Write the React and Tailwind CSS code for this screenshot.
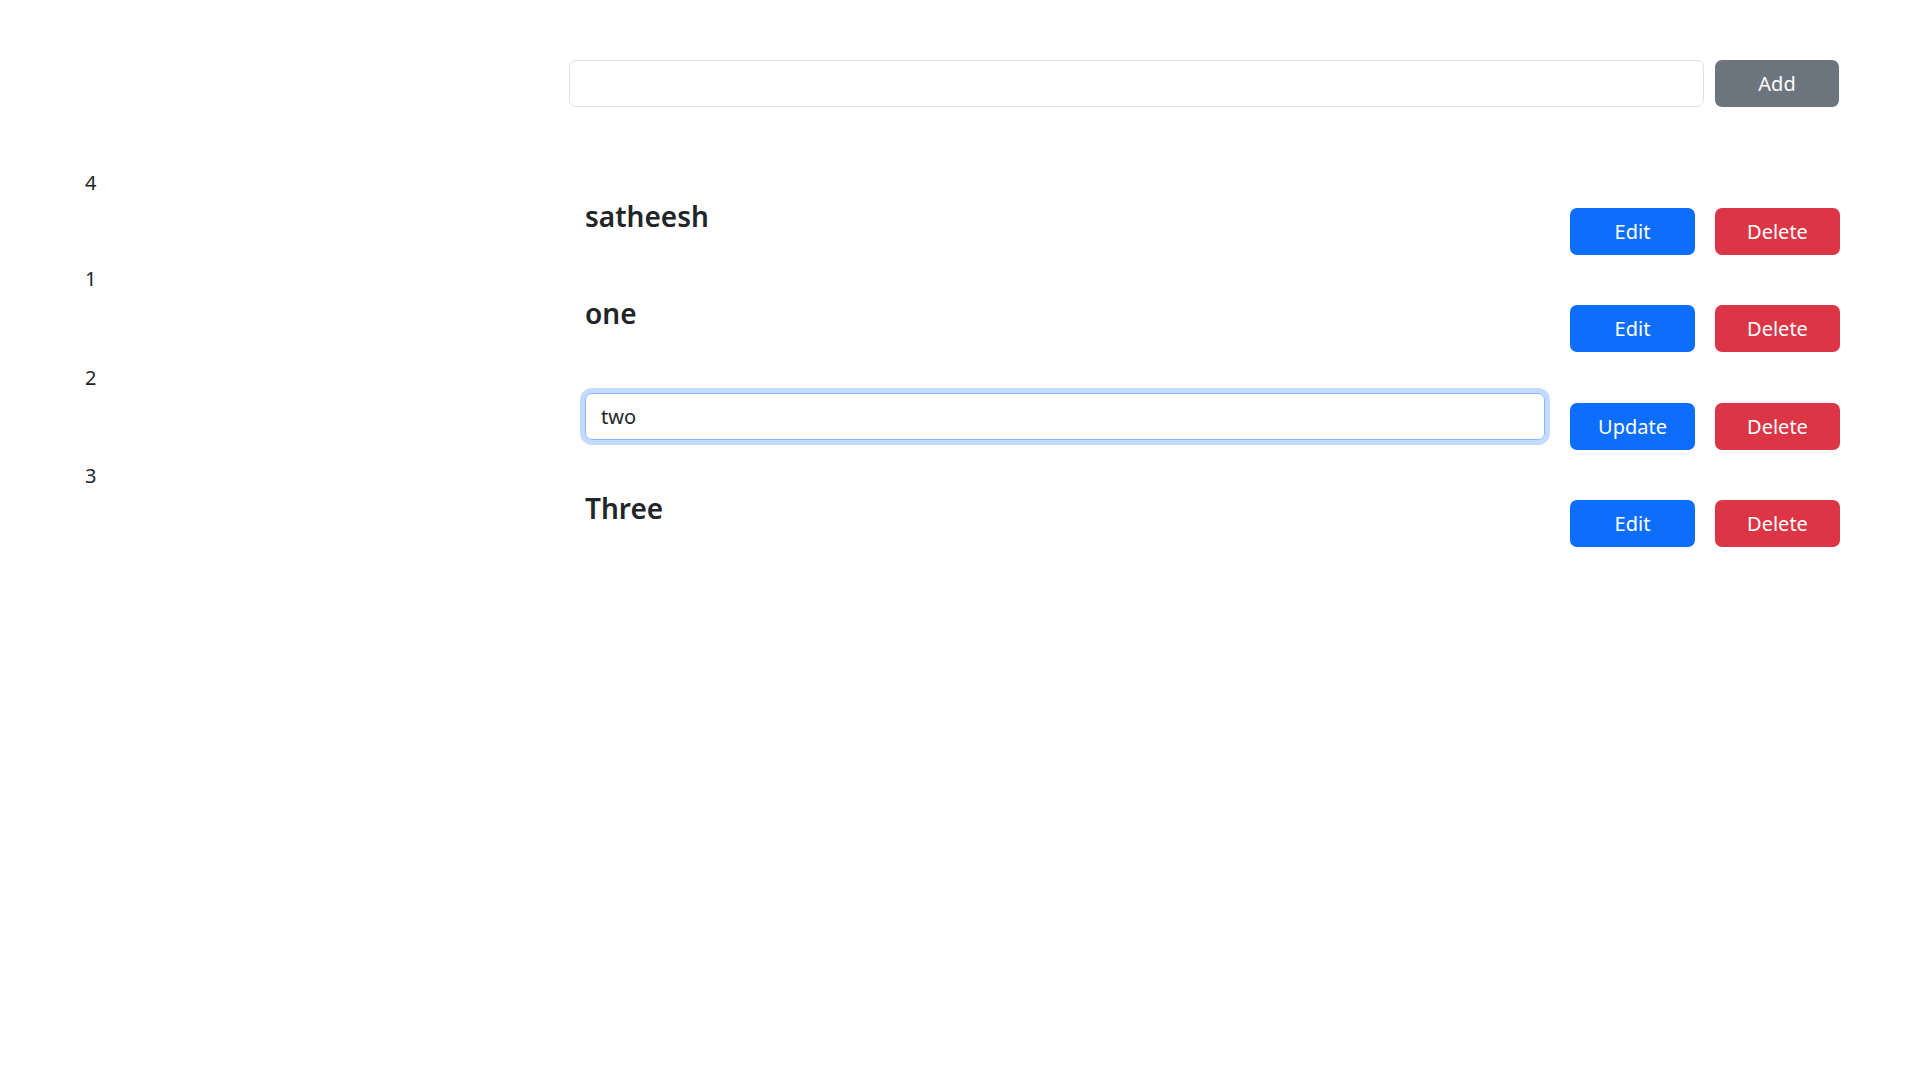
import React, { useState } from "react";

const App = () => {
  const [items] = useState([
    { id: 4, name: "satheesh" },
    { id: 1, name: "one" },
    { id: 2, name: "two", editing: true },
    { id: 3, name: "Three" },
  ]);
  const rowHeights = ["h-[97px]", "h-[98px]", "h-[97px]", "h-[98px]"];
  const numHeights = ["h-[96px]", "h-[99px]", "h-[98px]", "h-[98px]"];

  return (
    <div
      className="min-h-screen w-full bg-white text-[#212529] flex"
      style={{ fontFamily: '"Noto Sans", "Open Sans", sans-serif' }}
    >
      {/* left column with ids */}
      <div className="w-[569px] shrink-0 pt-[168px] pl-[85px]">
        {items.map((item, i) => (
          <div key={item.id} className={`${numHeights[i]} text-[20px] leading-[30px]`}>
            {item.id}
          </div>
        ))}
      </div>

      {/* right column */}
      <div className="w-[1270px] shrink-0 pt-[60px]">
        <div className="flex gap-[11px] h-[47px]">
          <input
            type="text"
            className="flex-1 h-[47px] border border-[#dee2e6] rounded-[7px] px-[15px] text-[20px] outline-none"
          />
          <button className="w-[124px] h-[47px] rounded-[7px] bg-[#6c757d] text-white text-[20px]">
            Add
          </button>
        </div>

        <div className="mt-[86px]">
          {items.map((item, i) => (
            <div key={item.id} className={`${rowHeights[i]} flex items-start`}>
              <div className="w-[1001px] shrink-0 pl-[16px]">
                {item.editing ? (
                  <input
                    type="text"
                    defaultValue={item.name}
                    className="mt-[5px] w-[960px] h-[47px] border border-[#86b7fe] rounded-[7px] px-[15px] text-[20px] outline-none shadow-[0_0_0_5px_rgba(13,110,253,0.25)]"
                  />
                ) : (
                  <h4 className="mt-[5px] text-[28px] leading-[36px] font-semibold">
                    {item.name}
                  </h4>
                )}
              </div>
              <div className="flex gap-[20px] mt-[15px]">
                <button className="w-[125px] h-[47px] rounded-[7px] bg-[#0d6efd] text-white text-[20px]">
                  {item.editing ? "Update" : "Edit"}
                </button>
                <button className="w-[125px] h-[47px] rounded-[7px] bg-[#dc3545] text-white text-[20px]">
                  Delete
                </button>
              </div>
            </div>
          ))}
        </div>
      </div>
    </div>
  );
};

export default App;
